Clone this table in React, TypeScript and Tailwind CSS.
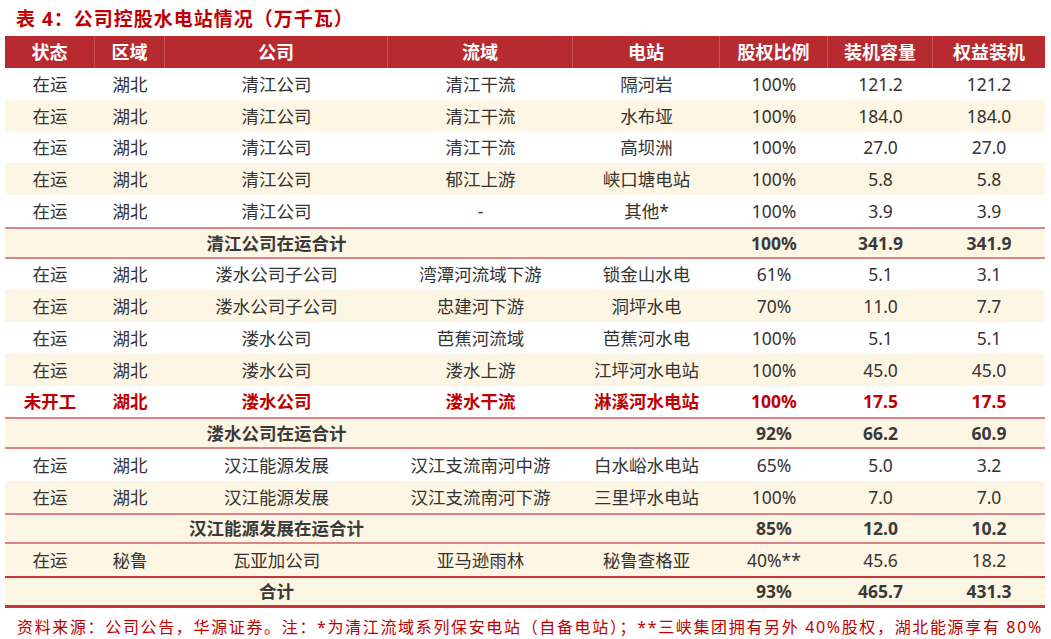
import React from "react";

type Row = {
  kind: "data" | "red" | "sub" | "total";
  cells: string[];
  cream?: boolean;
};

const widths = ["w-[90px]", "w-[70px]", "w-[223px]", "w-[185px]", "w-[147px]", "w-[108px]", "w-[105px]", "w-[112px]"];

const headers = ["状态", "区域", "公司", "流域", "电站", "股权比例", "装机容量", "权益装机"];

const rows: Row[] = [
  { kind: "data", cells: ["在运", "湖北", "清江公司", "清江干流", "隔河岩", "100%", "121.2", "121.2"] },
  { kind: "data", cream: true, cells: ["在运", "湖北", "清江公司", "清江干流", "水布垭", "100%", "184.0", "184.0"] },
  { kind: "data", cells: ["在运", "湖北", "清江公司", "清江干流", "高坝洲", "100%", "27.0", "27.0"] },
  { kind: "data", cream: true, cells: ["在运", "湖北", "清江公司", "郁江上游", "峡口塘电站", "100%", "5.8", "5.8"] },
  { kind: "data", cells: ["在运", "湖北", "清江公司", "-", "其他*", "100%", "3.9", "3.9"] },
  { kind: "sub", cells: ["", "", "清江公司在运合计", "", "", "100%", "341.9", "341.9"] },
  { kind: "data", cells: ["在运", "湖北", "溇水公司子公司", "湾潭河流域下游", "锁金山水电", "61%", "5.1", "3.1"] },
  { kind: "data", cream: true, cells: ["在运", "湖北", "溇水公司子公司", "忠建河下游", "洞坪水电", "70%", "11.0", "7.7"] },
  { kind: "data", cells: ["在运", "湖北", "溇水公司", "芭蕉河流域", "芭蕉河水电", "100%", "5.1", "5.1"] },
  { kind: "data", cream: true, cells: ["在运", "湖北", "溇水公司", "溇水上游", "江坪河水电站", "100%", "45.0", "45.0"] },
  { kind: "red", cells: ["未开工", "湖北", "溇水公司", "溇水干流", "淋溪河水电站", "100%", "17.5", "17.5"] },
  { kind: "sub", cells: ["", "", "溇水公司在运合计", "", "", "92%", "66.2", "60.9"] },
  { kind: "data", cells: ["在运", "湖北", "汉江能源发展", "汉江支流南河中游", "白水峪水电站", "65%", "5.0", "3.2"] },
  { kind: "data", cream: true, cells: ["在运", "湖北", "汉江能源发展", "汉江支流南河下游", "三里坪水电站", "100%", "7.0", "7.0"] },
  { kind: "sub", cells: ["", "", "汉江能源发展在运合计", "", "", "85%", "12.0", "10.2"] },
  { kind: "data", cream: true, cells: ["在运", "秘鲁", "瓦亚加公司", "亚马逊雨林", "秘鲁查格亚", "40%**", "45.6", "18.2"] },
  { kind: "total", cells: ["", "", "合计", "", "", "93%", "465.7", "431.3"] },
];

function rowClass(r: Row) {
  if (r.kind === "sub") return "bg-[#fef6e4] border-y-2 border-[#dd8286] font-bold text-[#3a3a3a]";
  if (r.kind === "total") return "bg-[#fef6e4] border-t-2 border-b-[3px] border-[#c5363c] font-bold text-[#3a3a3a]";
  if (r.kind === "red") return "bg-white font-bold text-[#c00000]";
  return (r.cream ? "bg-[#fef6e4]" : "bg-white") + " text-[#333333]";
}

export default function App() {
  return (
    <div
      className="w-[1051px] h-[639px] bg-white overflow-hidden"
      style={{ fontFamily: '"Noto Sans", "Noto Sans CJK SC", sans-serif' }}
    >
      <div className="h-[36px] pl-[16px] pt-[6px] text-[19px] font-bold leading-[26px] tracking-[1px] text-[#c00000] whitespace-nowrap">
        表 4：公司控股水电站情况（万千瓦）
      </div>

      <div className="ml-[5px] w-[1040px]">
        {/* 表头 */}
        <div className="flex h-[32px] bg-[#b72a30] text-[18px] font-bold text-white">
          {headers.map((h, i) => (
            <div
              key={h}
              className={`${widths[i]} flex items-center justify-center ${i < 7 ? "border-r border-[#c9555a]" : ""}`}
            >
              {h}
            </div>
          ))}
        </div>

        {/* 数据行 */}
        {rows.map((r, ri) => (
          <div key={ri} className={`flex h-[31.75px] text-[17.5px] ${rowClass(r)}`}>
            {r.cells.map((c, i) => (
              <div key={i} className={`${widths[i]} flex items-center justify-center whitespace-nowrap`}>
                {c}
              </div>
            ))}
          </div>
        ))}
      </div>

      <div className="pl-[17px] pt-[8px] text-[16px] leading-[22px] tracking-[1.65px] text-[#c00000] whitespace-nowrap">
        资料来源：公司公告，华源证券。注：*为清江流域系列保安电站（自备电站）；**三峡集团拥有另外 40%股权，湖北能源享有 80%
      </div>
    </div>
  );
}
